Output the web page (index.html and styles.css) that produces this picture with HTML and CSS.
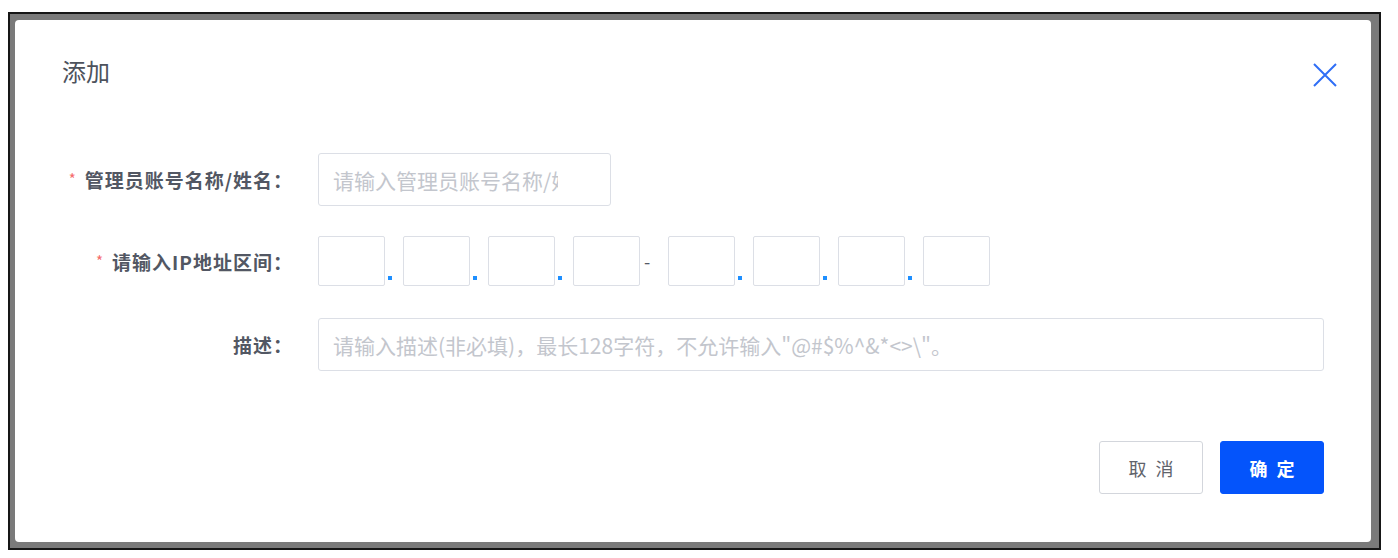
FILE: index.html
```html
<!DOCTYPE html>
<html lang="zh-CN">
<head>
<meta charset="utf-8">
<title>添加</title>
<link rel="stylesheet" href="styles.css">
</head>
<body>
<div class="screen">
  <div class="frame">
    <div class="modal">
      <div class="modal-header">
        <h2 class="modal-title">添加</h2>
        <button class="close" type="button" aria-label="关闭">
          <svg width="24" height="24" viewBox="0 0 24 24"><path d="M1 1 L23 23 M23 1 L1 23" stroke="currentColor" stroke-width="2" fill="none"/></svg>
        </button>
      </div>
      <div class="form">
        <div class="row">
          <label class="label"><span class="req">*</span>管理员账号名称/姓名：</label>
          <input class="input input-name" type="text" placeholder="请输入管理员账号名称/姓名">
        </div>
        <div class="row">
          <label class="label"><span class="req">*</span>请输入IP地址区间：</label>
          <div class="ip">
            <input class="ip-box" type="text"><span class="sep-dot"><i></i></span>
            <input class="ip-box" type="text"><span class="sep-dot"><i></i></span>
            <input class="ip-box" type="text"><span class="sep-dot"><i></i></span>
            <input class="ip-box" type="text"><span class="sep-dash">-</span>
            <input class="ip-box" type="text"><span class="sep-dot"><i></i></span>
            <input class="ip-box" type="text"><span class="sep-dot"><i></i></span>
            <input class="ip-box" type="text"><span class="sep-dot"><i></i></span>
            <input class="ip-box" type="text">
          </div>
        </div>
        <div class="row">
          <label class="label">描述：</label>
          <input class="input input-desc" type="text" placeholder="请输入描述(非必填)，最长128字符，不允许输入&quot;@#$%^&amp;*&lt;&gt;\&quot;。">
        </div>
      </div>
      <div class="footer">
        <button class="btn btn-cancel" type="button">取消</button>
        <button class="btn btn-primary" type="button">确定</button>
      </div>
    </div>
  </div>
</div>
</body>
</html>
```

FILE: styles.css
```css
* { box-sizing: border-box; }

html, body {
  margin: 0;
  padding: 0;
  background: #ffffff;
  font-family: "Noto Sans CJK SC", "Noto Sans", "Liberation Sans", sans-serif;
}

.screen {
  padding: 12px 0 0 8px;
  width: 1398px;
  height: 558px;
}

.frame {
  width: 1373px;
  height: 538px;
  border: 2px solid #161616;
  background: #7a7a7a;
  padding: 6px 8px 6px 5px;
}

.modal {
  width: 1356px;
  height: 522px;
  background: #ffffff;
  border-radius: 4px;
  display: flex;
  flex-direction: column;
}

.modal-header {
  display: flex;
  justify-content: space-between;
  align-items: flex-start;
  padding: 35px 34px 0 47px;
}

.modal-title {
  margin: 0;
  font-size: 24px;
  line-height: 32px;
  font-weight: 400;
  color: #4d525c;
}

.close {
  margin-top: 8px;
  padding: 0;
  border: 0;
  background: transparent;
  width: 24px;
  height: 24px;
  color: #2f6ef6;
  display: flex;
}

.form {
  margin-top: 66px;
  padding: 0 47px;
  display: flex;
  flex-direction: column;
}

.row {
  display: flex;
  align-items: center;
  gap: 25px;
}

.row + .row { margin-top: 30px; }
.row:last-child { margin-top: 32px; }

.label {
  width: 231px;
  flex: none;
  text-align: right;
  font-size: 19px;
  letter-spacing: 1px;
  font-weight: 700;
  color: #525763;
  white-space: nowrap;
}

.req {
  color: #f56c6c;
  font-weight: 400;
  font-size: 15px;
  margin-right: 8px;
  vertical-align: 3px;
}

.input {
  height: 53px;
  border: 1px solid #dcdfe6;
  border-radius: 3px;
  font-family: inherit;
  font-size: 21px;
  color: #606266;
  outline: none;
  background: #fff;
}

.input::placeholder {
  color: #c3c6cd;
  opacity: 1;
}

.input-name {
  width: 293px;
  padding: 0 52px 0 14px;
}

.input-desc {
  width: 1006px;
  padding: 0 14px;
}

.ip {
  display: flex;
  align-items: center;
  height: 50px;
}

.ip-box {
  width: 67px;
  height: 50px;
  border: 1px solid #dcdfe6;
  border-radius: 2px;
  outline: none;
  background: #fff;
  flex: none;
}

.sep-dot {
  width: 18px;
  height: 50px;
  flex: none;
  display: flex;
  align-items: flex-end;
  padding: 0 0 6px 3px;
}

.sep-dot i {
  display: block;
  width: 4px;
  height: 4px;
  background: #1e8fff;
}

.sep-dash {
  width: 28px;
  flex: none;
  padding-left: 4px;
  font-size: 18px;
  line-height: 20px;
  color: #555a66;
}

.footer {
  margin-top: 70px;
  padding: 0 47px;
  display: flex;
  justify-content: flex-end;
  gap: 17px;
}

.btn {
  width: 104px;
  height: 53px;
  border-radius: 3px;
  font-family: inherit;
  font-size: 18px;
  letter-spacing: 9px;
  text-indent: 9px;
  padding: 0;
  cursor: pointer;
}

.btn-cancel {
  background: #fff;
  border: 1px solid #d3d6dc;
  color: #5f636b;
}

.btn-primary {
  background: #0454fb;
  border: 1px solid #0454fb;
  color: #ffffff;
  font-weight: 700;
}
```
